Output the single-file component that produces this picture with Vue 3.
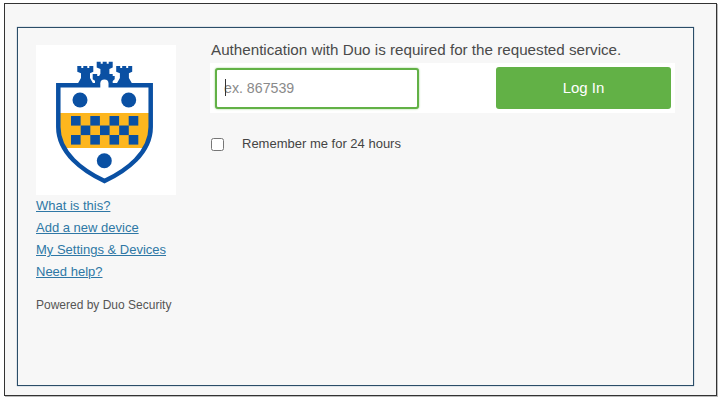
<template>
  <div class="screen">
    <div class="outer">
      <div class="frame">
        <aside class="side">
          <div class="logo">
            <svg width="140" height="150" viewBox="0 0 140 150">
              <defs>
                <clipPath id="shield-clip">
                  <path :d="shieldPath" />
                </clipPath>
              </defs>
              <!-- towers at the back -->
              <path class="blue" :d="towerPath" />
              <path class="blue" :d="towerPath" transform="translate(19.400 -4.300)" />
              <path class="blue" :d="towerPath" transform="translate(38.900 0)" />
              <!-- shield -->
              <path class="shield-fill" :d="shieldPath" />
              <rect class="band" x="20" y="68" width="97" height="35" clip-path="url(#shield-clip)" />
              <path class="shield-line" :d="shieldPath" />
              <!-- front tower, the gate opens into the white part -->
              <path class="blue" d="M56.700 29h4.500v2h3.600v-2h3.800v2h3.600v-2h4.500v2h2v3.300l-2 1.500V42H59V35.800l-2.300-1.500z" />
              <path class="gate" d="M64.300 46V38.500a4.100 4.100 0 0 1 8.200 0V46z" />
              <circle class="blue" cx="44" cy="55" r="7.500" />
              <circle class="blue" cx="92.700" cy="55" r="7.500" />
              <circle class="blue" cx="68.300" cy="115.700" r="7.500" />
              <rect v-for="c in checks" :key="c.x + '-' + c.y" class="blue" :x="c.x" :y="c.y" width="9.600" height="9.600" />
            </svg>
          </div>
          <nav class="links">
            <a href="#">What is this?</a>
            <a href="#">Add a new device</a>
            <a href="#">My Settings &amp; Devices</a>
            <a href="#">Need help?</a>
          </nav>
          <p class="powered">Powered by Duo Security</p>
        </aside>

        <main class="content">
          <p class="message">Authentication with Duo is required for the requested service.</p>
          <form class="passcode" @submit.prevent>
            <div class="input-wrap">
              <input type="text" placeholder="ex. 867539" />
              <span class="caret"></span>
            </div>
            <button type="submit">Log In</button>
          </form>
          <label class="remember">
            <span class="box"></span>
            <span>Remember me for 24 hours</span>
          </label>
        </main>
      </div>
    </div>
  </div>
</template>

<script setup>
const shieldPath = 'M22.300 40.300H114.700V82C114.700 108 90 126 68.500 136C47 126 22.300 108 22.300 82Z'
const towerPath = 'M41.300 21h4v2h2v-2h4v2h2v-2h4v5.700l-3.300 1.500V33l4 7H41l4-7v-4.800l-3.700-1.500z'

const checks = []
const xs = [35, 54.3, 73.5, 92.7]
const xs2 = [44.7, 64, 83.2]
for (const y of [71, 90]) {
  for (const x of xs) checks.push({ x, y })
}
for (const x of xs2) checks.push({ x, y: 80.5 })
</script>

<style>
html,
body {
  background: #fff;
}
</style>

<style scoped>
.screen {
  width: 723px;
  height: 401px;
  box-sizing: border-box;
  padding: 3px 6px 5px 4px;
  font-family: "Liberation Sans", Arial, sans-serif;
  overflow: hidden;
}

.outer {
  height: 100%;
  box-sizing: border-box;
  padding: 23px 22px 9px 12px;
  background: #f7f7f7;
  border: 1px solid #333;
  box-shadow: 1px 1px 0 #bbb;
}

.frame {
  height: 100%;
  box-sizing: border-box;
  display: flex;
  padding: 17px 0 0 18px;
  border: 1px solid #2b4d68;
  box-shadow: 0 0 1px #6d8aa3;
}

.side {
  width: 140px;
  flex: none;
}

.logo {
  height: 150px;
  background: #fff;
}

.logo svg {
  display: block;
  filter: blur(0.35px);
}

.blue {
  fill: #0a50a3;
}

.shield-fill,
.gate {
  fill: #fff;
}

.shield-line {
  fill: none;
  stroke: #0a50a3;
  stroke-width: 4.500;
}

.band {
  fill: #fdb61e;
}

.links {
  display: flex;
  flex-direction: column;
  gap: 4px;
  margin-top: 2px;
}

.links a {
  font-size: 13px;
  line-height: 18px;
  color: #2e77a5;
}

.powered {
  margin: 17px 0 0;
  font-size: 12px;
  line-height: 14px;
  color: #555;
}

.content {
  margin-left: 34px;
  width: 465px;
}

.message {
  margin: -4px 0 4px;
  padding-left: 1px;
  font-size: 15.200px;
  line-height: 18px;
  color: #4a4a4a;
}

.passcode {
  height: 50px;
  box-sizing: border-box;
  display: flex;
  justify-content: space-between;
  padding: 4px 4px 4px 5px;
  background: #fff;
}

.input-wrap {
  position: relative;
  width: 204px;
  height: 41px;
  margin-top: 1px;
}

.input-wrap input {
  width: 100%;
  height: 100%;
  box-sizing: border-box;
  padding: 0 7px 2px;
  border: 2px solid #62b146;
  border-radius: 3px;
  box-shadow: 0 0 2px #8cc878;
  outline: none;
  background: #fff;
  font-family: inherit;
  font-size: 14.200px;
  color: #444;
}

.input-wrap input::placeholder {
  color: #8a8a8a;
  opacity: 1;
}

.caret {
  position: absolute;
  left: 10px;
  top: 11px;
  width: 1px;
  height: 17px;
  background: #333;
}

button {
  width: 175px;
  height: 42px;
  padding: 0 0 2px;
  border: none;
  border-radius: 3px;
  background: #62b146;
  color: #fff;
  font-family: inherit;
  font-size: 15px;
}

.remember {
  display: flex;
  align-items: center;
  gap: 18px;
  margin-top: 23px;
  padding-left: 1px;
  font-size: 13px;
  line-height: 16px;
  color: #444;
}

.box {
  width: 13px;
  height: 13px;
  box-sizing: border-box;
  border: 1px solid #767676;
  border-radius: 2.500px;
  background: #fff;
}
</style>
